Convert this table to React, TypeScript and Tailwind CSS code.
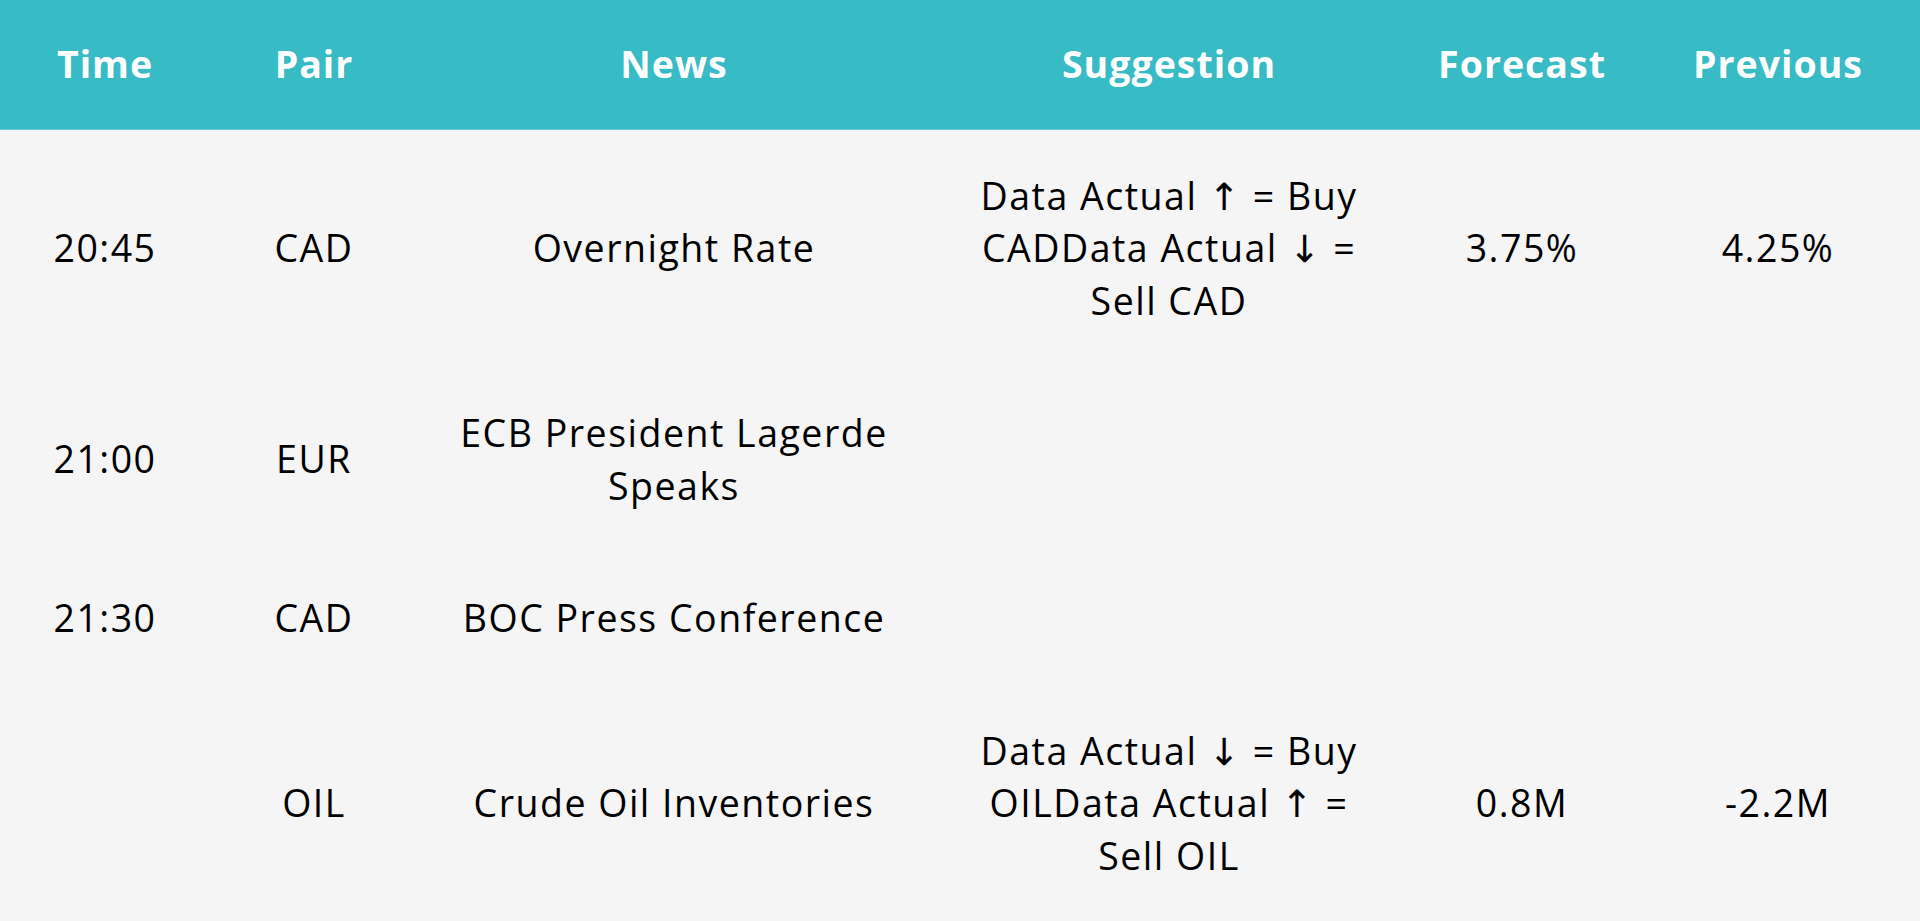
const columns = [
  { label: 'Time', width: 'w-[210px]' },
  { label: 'Pair', width: 'w-[208px]' },
  { label: 'News', width: 'w-[512px]' },
  { label: 'Suggestion', width: 'w-[478px]' },
  { label: 'Forecast', width: 'w-[228px]' },
  { label: 'Previous', width: 'w-[284px]' },
];

const rows = [
  {
    time: '20:45',
    pair: 'CAD',
    news: ['Overnight Rate'],
    suggestion: ['Data Actual ↑ = Buy', 'CADData Actual ↓ =', 'Sell CAD'],
    forecast: '3.75%',
    previous: '4.25%',
  },
  {
    time: '21:00',
    pair: 'EUR',
    news: ['ECB President Lagerde', 'Speaks'],
    suggestion: [],
    forecast: '',
    previous: '',
  },
  {
    time: '21:30',
    pair: 'CAD',
    news: ['BOC Press Conference'],
    suggestion: [],
    forecast: '',
    previous: '',
  },
  {
    time: '',
    pair: 'OIL',
    news: ['Crude Oil Inventories'],
    suggestion: ['Data Actual ↓ = Buy', 'OILData Actual ↑ =', 'Sell OIL'],
    forecast: '0.8M',
    previous: '-2.2M',
  },
];

const Lines = ({ lines }: { lines: string[] }) => (
  <>
    {lines.map((line, i) => (
      <span key={i} className="block whitespace-nowrap">
        {line}
      </span>
    ))}
  </>
);

const App = () => {
  return (
    <div className="min-h-screen bg-[#f5f5f5] font-['Open_Sans','DejaVu_Sans',sans-serif]">
      <table className="w-[1920px] table-fixed border-collapse">
        <colgroup>
          {columns.map((col) => (
            <col key={col.label} className={col.width} />
          ))}
        </colgroup>
        <thead>
          <tr className="bg-[#37bbc5] border-b border-[#5fcbd2]">
            {columns.map((col) => (
              <th
                key={col.label}
                className="h-[129px] p-0 text-center align-middle text-[37.5px] leading-[52.5px] font-bold tracking-[1px] text-white"
              >
                {col.label}
              </th>
            ))}
          </tr>
        </thead>
        <tbody className="text-[37.5px] leading-[52.5px] tracking-[1.5px] text-black">
          {rows.map((row, index) => (
            <tr key={index}>
              <td className="py-10 px-0 text-center align-middle">{row.time}</td>
              <td className="py-10 px-0 text-center align-middle">{row.pair}</td>
              <td className="py-10 px-0 text-center align-middle">
                <Lines lines={row.news} />
              </td>
              <td className="py-10 px-0 text-center align-middle">
                <Lines lines={row.suggestion} />
              </td>
              <td className="py-10 px-0 text-center align-middle">{row.forecast}</td>
              <td className="py-10 px-0 text-center align-middle">{row.previous}</td>
            </tr>
          ))}
        </tbody>
      </table>
    </div>
  );
};

export default App;
